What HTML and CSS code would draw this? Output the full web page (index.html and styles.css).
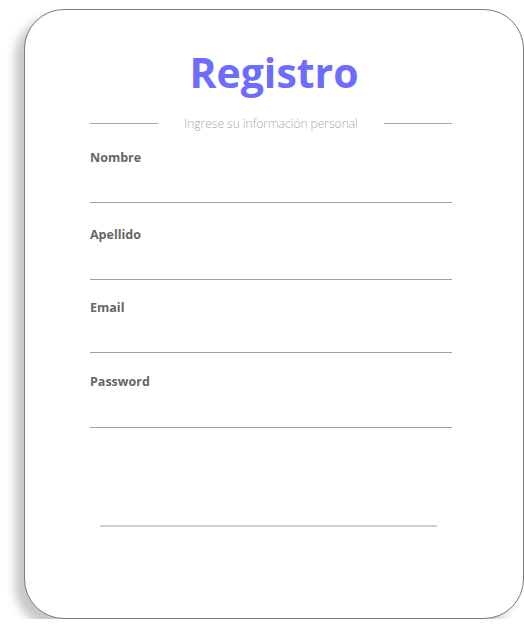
FILE: index.html
```html
<!DOCTYPE html>
<html lang="es">
<head>
<meta charset="utf-8">
<title>Registro</title>
<link rel="stylesheet" href="styles.css">
</head>
<body>
<div class="card">
  <h1 class="title">Registro</h1>
  <div class="subtitle">
    <span class="rule"></span>
    <span class="subtitle-text">Ingrese su información personal</span>
    <span class="rule"></span>
  </div>
  <form class="form">
    <div class="field">
      <label class="label">Nombre</label>
      <input class="input" type="text">
    </div>
    <div class="field field-2">
      <label class="label">Apellido</label>
      <input class="input" type="text">
    </div>
    <div class="field field-3">
      <label class="label">Email</label>
      <input class="input" type="email">
    </div>
    <div class="field field-4">
      <label class="label">Password</label>
      <input class="input input-tall" type="password">
    </div>
    <div class="submit-line"></div>
  </form>
</div>
</body>
</html>
```
FILE: styles.css
```css
* { box-sizing: border-box; }
html, body { margin: 0; padding: 0; background: #fff; }
body {
  padding: 9px 0 0 24px;
  font-family: "Open Sans", "Noto Sans", sans-serif;
}
.card {
  width: 500px;
  height: 610px;
  border: 1px solid #7a7a7a;
  border-radius: 40px;
  background: #fff;
  box-shadow: -9px 8px 10px rgba(0, 0, 0, 0.22);
  padding-top: 38px;
}
.title {
  margin: 0;
  text-align: center;
  font-size: 41px;
  line-height: 48px;
  font-weight: 700;
  color: #6c6cff;
}
.subtitle {
  display: flex;
  align-items: center;
  justify-content: center;
  gap: 26px;
  margin: 19px 0 0 65px;
  width: 362px;
  height: 16px;
}
.rule {
  flex: 1;
  height: 1px;
  background: #a8a8a8;
}
.subtitle-text {
  font-size: 12px;
  font-weight: 300;
  color: #a9a9a9;
  white-space: nowrap;
}
.form {
  margin-left: 65px;
  width: 362px;
  padding-top: 19px;
}
.field-2 { margin-top: 24px; }
.field-3 { margin-top: 20px; }
.field-4 { margin-top: 21px; }
.label {
  display: block;
  font-size: 12.5px;
  line-height: 16px;
  font-weight: 700;
  color: #666;
}
.input {
  display: block;
  width: 100%;
  height: 37px;
  border: 0;
  border-bottom: 1px solid #a0a0a0;
  outline: none;
  background: transparent;
  padding: 0;
}
.input-tall { height: 38px; }
.submit-line {
  margin: 97px 0 0 10px;
  width: 337px;
  height: 2px;
  background: #cfcfcf;
}
```
